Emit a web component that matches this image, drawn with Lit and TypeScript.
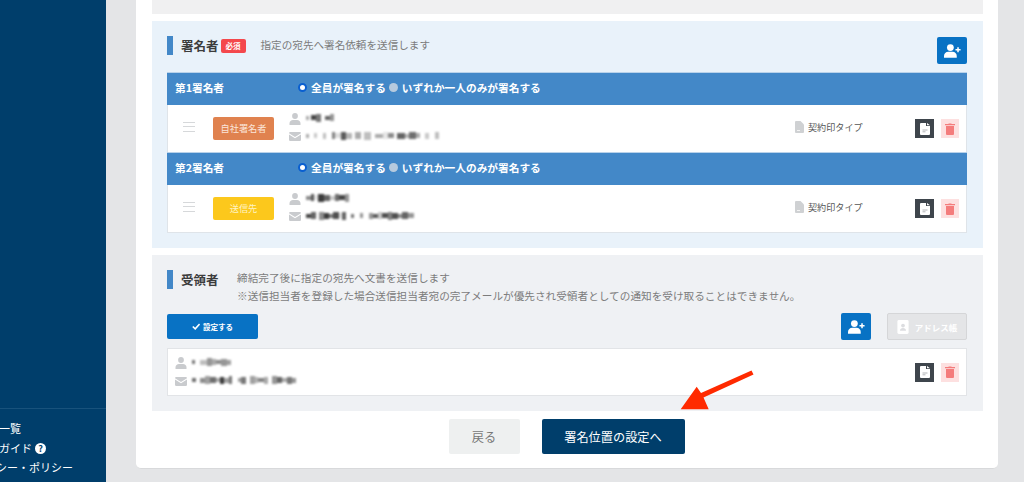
import { LitElement, html, css, svg } from "lit";
import { customElement } from "lit/decorators.js";

const userPlus = svg`<svg class="ic" viewBox="0 0 20 16" width="17" height="14"><circle cx="7.5" cy="4" r="4" fill="currentColor"/><path d="M0 16v-2.200C0 11 2.200 9 5 9h5c2.800 0 5 2 5 4.800V16z" fill="currentColor"/><path d="M16.500 3.500v6M13.500 6.500h6" stroke="currentColor" stroke-width="1.800"/></svg>`;
const person = svg`<svg viewBox="0 0 12 12" width="12" height="12"><circle cx="6" cy="3" r="2.900" fill="#c9cbce"/><path d="M.5 12v-1.500C.5 8.500 2 7 4 7h4c2 0 3.500 1.500 3.500 3.500V12z" fill="#c9cbce"/></svg>`;
const mail = svg`<svg viewBox="0 0 12 9" width="12" height="9"><path d="M0 1.200A1.200 1.200 0 0 1 1.200 0h9.600A1.200 1.200 0 0 1 12 1.200L6 5 0 1.200z" fill="#c9cbce"/><path d="M0 2.500V7.800A1.200 1.200 0 0 0 1.200 9h9.600A1.200 1.200 0 0 0 12 7.800V2.500L6 6.300z" fill="#c9cbce"/></svg>`;
const fileGray = svg`<svg viewBox="0 0 9 12" width="9" height="12"><path d="M0 1a1 1 0 0 1 1-1h4.500L9 3.500V11a1 1 0 0 1-1 1H1a1 1 0 0 1-1-1z" fill="#cfd1d3"/><path d="M2 9.500h3" stroke="#f4f4f4" stroke-width="1"/></svg>`;
const fileWhite = svg`<svg viewBox="0 0 10 12" width="10" height="12"><path d="M0 1a1 1 0 0 1 1-1h5v3h4v8a1 1 0 0 1-1 1H1a1 1 0 0 1-1-1z" fill="#fff"/><path d="M7 0l3 2.200H7z" fill="#fff"/><path d="M2.500 8.800h3M2.500 7h5" stroke="#aaadb0" stroke-width=".9"/></svg>`;
const trash = svg`<svg viewBox="0 0 10 12" width="10" height="12"><path d="M3.500 1V.4h3V1H10v1.300H0V1z" fill="#f47c7c"/><path d="M1 3h8v8a1 1 0 0 1-1 1H2a1 1 0 0 1-1-1z" fill="#f47c7c"/></svg>`;
const check = svg`<svg viewBox="0 0 10 8" width="8" height="7"><path d="M1 4l3 3 5.500-6" fill="none" stroke="#fff" stroke-width="2"/></svg>`;
const addressBook = svg`<svg viewBox="0 0 12 15" width="12" height="14"><rect width="12" height="15" rx="1.500" fill="#fff"/><circle cx="6" cy="6" r="2" fill="#dcdde0"/><path d="M2.800 11.500c0-2 1.200-3 3.200-3s3.200 1 3.200 3z" fill="#dcdde0"/></svg>`;

// redacted names and addresses: runs of grey squares, softened with a blur
const blocks = (widths: number[], shades: number[]) =>
  html`<span class="redacted">
    ${widths.map((w, i) => {
      const s = shades[i % shades.length];
      const h = 4 + ((i * 3) % 5);
      return html`<i style="width:${w}px;height:${h}px;background:rgb(${s},${s},${s})"></i>`;
    })}
  </span>`;

const signers = [
  {
    no: "第1署名者",
    badge: "自社署名者",
    tone: "own",
    name: blocks([3, 2, 5, 5, 4, 5, 4], [170, 255, 70, 120, 255, 100, 150]),
    addr: blocks([3, 5, 3, 6, 3, 6, 3, 6, 5, 6, 3, 6, 3, 7, 4, 8, 5, 6, 3, 8, 4, 7, 4, 5, 4, 6, 4, 7], [170, 255, 200, 255, 190, 255, 130, 220, 90, 180, 255, 170, 255, 190, 255, 170, 230, 140, 255, 100, 180, 110]),
  },
  {
    no: "第2署名者",
    badge: "送信先",
    tone: "ext",
    name: blocks([5, 3, 4, 6, 6, 5, 4, 6, 4], [140, 90, 230, 60, 100, 200, 110, 70, 150]),
    addr: blocks([5, 5, 3, 5, 5, 4, 6, 3, 4, 5, 3, 6, 3, 6, 4, 5, 4, 6, 4, 6, 4, 6, 6], [70, 100, 255, 140, 60, 120, 80, 230, 100, 255, 120, 255, 150, 255, 150, 90, 200, 80, 130, 80, 140, 100, 150]),
  },
];

@customElement("app-root")
export class AppRoot extends LitElement {
  static styles = css`
    :host {
      display: flex;
      width: 1024px;
      height: 482px;
      overflow: hidden;
      background: #e4e5e7;
      font-family: "Noto Sans CJK JP", "Noto Sans", sans-serif;
      color: #444;
    }

    .sidebar {
      flex: none;
      width: 106px;
      background: #003e6b;
      display: flex;
      flex-direction: column;
      justify-content: flex-end;
      overflow: hidden;
    }

    .side-links {
      border-top: 1px solid #18527c;
      height: 74px;
      padding-top: 10px;
      box-sizing: border-box;
      color: #fff;
      font-size: 11px;
      line-height: 19.500px;
      white-space: nowrap;
    }

    .side-links div {
      display: flex;
      align-items: center;
      gap: 3px;
    }

    .clip-a { margin-left: -1px; }
    .clip-b { margin-left: -1px; }
    .clip-c { margin-left: -4px; }

    .help {
      width: 11px;
      height: 11px;
      border-radius: 50%;
      background: #fff;
      color: #003e6b;
      font-size: 9px;
      font-weight: 700;
      line-height: 11px;
      text-align: center;
    }

    .main {
      flex: 1;
      padding: 0 26px 13px 30px;
      min-width: 0;
    }

    .card {
      height: 100%;
      box-sizing: border-box;
      background: #fff;
      border-radius: 0 0 5px 5px;
      border-bottom: 1px solid #d8d9db;
      padding: 0 15px 0 16px;
      display: flex;
      flex-direction: column;
    }

    .strip {
      height: 14px;
      background: #f0f0f1;
      margin-bottom: 7px;
    }

    .signers {
      height: 227px;
      box-sizing: border-box;
      background: #e9f2fa;
      padding: 0 16px 0 15px;
      margin-bottom: 7px;
    }

    .sec-head {
      display: flex;
      align-items: flex-start;
      height: 51px;
      padding-top: 15px;
      box-sizing: border-box;
    }

    .bar {
      flex: none;
      width: 6px;
      height: 19px;
      background: #4388c8;
      margin-right: 8px;
    }

    .title {
      font-size: 12.500px;
      font-weight: 700;
      line-height: 19px;
      color: #3c3c3c;
    }

    .required {
      margin: 3px 15px 0 2px;
      width: 25px;
      height: 14px;
      border-radius: 2px;
      background: #f4484c;
      color: #fff;
      font-size: 7.500px;
      font-weight: 700;
      line-height: 14px;
      text-align: center;
    }

    .desc {
      font-size: 10.600px;
      line-height: 18px;
      color: #7c7c7c;
      white-space: nowrap;
    }

    .recipients .desc {
      font-size: 10.650px;
    }

    .add {
      flex: none;
      width: 30px;
      height: 27px;
      border-radius: 2px;
      background: #0872c4;
      color: #fff;
      display: flex;
      align-items: center;
      justify-content: center;
    }

    .signers .add {
      margin: 1px 0 0 auto;
    }

    .table {
      border: 1px solid #dfe4e9;
      border-top: 0;
    }

    .t-head {
      height: 33px;
      margin: 0 -1px;
      background: #4388c8;
      color: #fff;
      font-size: 10.700px;
      font-weight: 700;
      display: flex;
      align-items: center;
      padding: 0 0 3px 8px;
      border-top: 1px solid #b9d2ea;
      box-sizing: border-box;
    }

    .t-no {
      width: 123px;
    }

    .radio {
      width: 9px;
      height: 9px;
      border-radius: 50%;
      box-sizing: border-box;
      margin-right: 4px;
    }

    .radio.on {
      background: #fff;
      border: 2px solid #0a5fd0;
    }

    .radio.off {
      background: #b6cade;
      margin: 0 4px 0 3px;
    }

    .row {
      height: 47px;
      background: #fff;
      display: flex;
      align-items: center;
      font-size: 9.200px;
      box-sizing: border-box;
    }

    .handle {
      width: 12px;
      height: 10px;
      margin: 0 18px 3px 15px;
      border-top: 1.500px solid #d6d8da;
      border-bottom: 1.500px solid #d6d8da;
      position: relative;
      box-sizing: border-box;
    }

    .handle::after {
      content: "";
      position: absolute;
      left: 0;
      right: 0;
      top: 2.500px;
      height: 1.500px;
      background: #d6d8da;
    }

    .badge {
      flex: none;
      width: 61px;
      height: 23px;
      border-radius: 2px;
      color: #fff;
      text-align: center;
      line-height: 23px;
      margin-right: 15px;
    }

    .badge.own { background: #e0824f; color: #fbe6da; }
    .badge.ext { background: #fcc81c; color: #fff3c4; }

    .who {
      display: flex;
      flex-direction: column;
      gap: 6px;
    }

    .row .who {
      margin-bottom: 2px;
    }

    .who div {
      display: flex;
      align-items: center;
      gap: 5px;
      height: 12px;
    }

    .redacted {
      display: inline-flex;
      align-items: center;
      height: 8px;
      margin-top: -2px;
      filter: blur(1px);
    }

    .redacted i {
      display: block;
    }

    .stamp {
      margin: 0 0 3px auto;
      display: flex;
      align-items: center;
      gap: 4px;
      color: #555;
      width: 120px;
      font-size: 9.100px;
    }

    .btn-file,
    .btn-del {
      flex: none;
      height: 19px;
      display: flex;
      align-items: center;
      justify-content: center;
    }

    .btn-file {
      width: 19px;
      background: #3e454c;
      margin-right: 7px;
    }

    .btn-del {
      width: 18px;
      background: #fde0e0;
      margin-right: 7px;
    }

    .recipients {
      height: 156px;
      box-sizing: border-box;
      background: #eff1f4;
      padding: 0 16px 0 15px;
      margin-bottom: 8px;
    }

    .recipients .sec-head {
      height: 58px;
      padding-top: 14px;
    }

    .recipients .bar {
      margin-top: 1px;
    }

    .recipients .title {
      width: 56px;
      margin-top: 1px;
    }

    .tools {
      display: flex;
      align-items: center;
      height: 27px;
      margin-bottom: 8px;
    }

    .set {
      width: 91px;
      height: 25px;
      border-radius: 2px;
      background: #0872c4;
      color: #fff;
      font-size: 7.500px;
      font-weight: 700;
      display: flex;
      align-items: center;
      justify-content: center;
      gap: 3px;
    }

    .tools .add {
      margin-left: auto;
    }

    .book {
      width: 80px;
      height: 27px;
      margin-left: 16px;
      box-sizing: border-box;
      border: 1px solid #d5d6d8;
      border-radius: 2px;
      background: #e4e5e7;
      color: #fff;
      font-size: 8.500px;
      font-weight: 700;
      display: flex;
      align-items: center;
      justify-content: center;
      gap: 6px;
    }

    .box {
      height: 48px;
      box-sizing: border-box;
      background: #fff;
      border: 1px solid #e2e4e7;
      display: flex;
      align-items: center;
      padding-left: 7px;
    }

    .box .btn-file {
      margin-left: auto;
    }

    .actions {
      display: flex;
      justify-content: center;
      gap: 22px;
      padding-right: 2px;
    }

    .actions div {
      height: 35px;
      border-radius: 2px;
      display: flex;
      align-items: center;
      justify-content: center;
      font-size: 12.200px;
    }

    .back {
      width: 71px;
      background: #eef0f0;
      color: #777;
    }

    .next {
      width: 143px;
      background: #003e6b;
      color: #fff;
    }

    .arrow {
      position: absolute;
      left: 670px;
      top: 362px;
    }
  `;

  render() {
    return html`
      <aside class="sidebar">
        <div class="side-links">
          <div class="clip-a">一覧</div>
          <div class="clip-b">ガイド <span class="help">?</span></div>
          <div class="clip-c">シー・ポリシー</div>
        </div>
      </aside>
      <div class="main">
        <div class="card">
          <div class="strip"></div>
          <section class="signers">
            <div class="sec-head">
              <span class="bar"></span>
              <span class="title">署名者</span>
              <span class="required">必須</span>
              <span class="desc">指定の宛先へ署名依頼を送信します</span>
              <span class="add">${userPlus}</span>
            </div>
            <div class="table">
              ${signers.map(
                (s) => html`
                  <div class="t-head">
                    <span class="t-no">${s.no}</span>
                    <span class="radio on"></span>
                    <span>全員が署名する</span>
                    <span class="radio off"></span>
                    <span>いずれか一人のみが署名する</span>
                  </div>
                  <div class="row">
                    <span class="handle"></span>
                    <span class="badge ${s.tone}">${s.badge}</span>
                    <span class="who">
                      <div>${person}${s.name}</div>
                      <div>${mail}${s.addr}</div>
                    </span>
                    <span class="stamp">${fileGray}<span>契約印タイプ</span></span>
                    <span class="btn-file">${fileWhite}</span>
                    <span class="btn-del">${trash}</span>
                  </div>
                `,
              )}
            </div>
          </section>
          <section class="recipients">
            <div class="sec-head">
              <span class="bar"></span>
              <span class="title">受領者</span>
              <span class="desc">
                締結完了後に指定の宛先へ文書を送信します<br />
                ※送信担当者を登録した場合送信担当者宛の完了メールが優先され受領者としての通知を受け取ることはできません。
              </span>
            </div>
            <div class="tools">
              <span class="set">${check}設定する</span>
              <span class="add">${userPlus}</span>
              <span class="book">${addressBook}アドレス帳</span>
            </div>
            <div class="box">
              <span class="who">
                <div>
                  ${person}${blocks([3, 5, 7, 5, 4, 5, 6, 4], [120, 255, 190, 150, 170, 140, 150, 160])}
                </div>
                <div>
                  ${mail}${blocks([4, 4, 5, 5, 6, 4, 4, 5, 3, 6, 3, 5, 4, 5, 3, 6, 4, 4, 5, 5, 5, 5, 4], [110, 255, 140, 160, 110, 170, 60, 160, 120, 255, 160, 120, 255, 160, 180, 130, 170, 255, 150, 100, 170, 120, 150])}
                </div>
              </span>
              <span class="btn-file">${fileWhite}</span>
              <span class="btn-del">${trash}</span>
            </div>
          </section>
          <div class="actions">
            <div class="back">戻る</div>
            <div class="next">署名位置の設定へ</div>
          </div>
        </div>
      </div>
      <svg class="arrow" width="90" height="52" viewBox="670 362 90 52">
        <path d="M680.700 409.300L696.700 386.700 701 393 751.500 370.500 753.500 374.500 703.500 397.500 708.700 409.300z" fill="#ff2a00" />
      </svg>
    `;
  }
}
